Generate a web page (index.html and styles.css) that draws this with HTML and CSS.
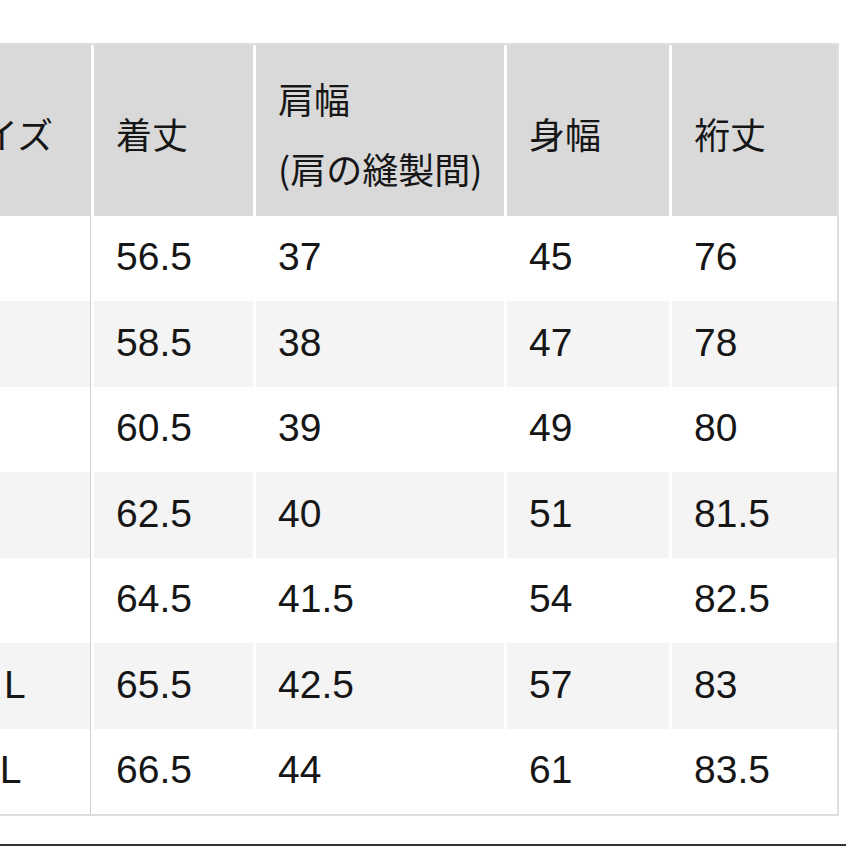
FILE: index.html
```html
<!DOCTYPE html>
<html lang="ja">
<head>
<meta charset="utf-8">
<title>サイズ表</title>
<link rel="stylesheet" href="styles.css">
</head>
<body>
<div class="page">
  <div class="size-table" role="table">
    <div class="row head" role="row">
      <div class="cell" role="columnheader"><span>サイズ</span></div>
      <div class="cell" role="columnheader"><span>着丈</span></div>
      <div class="cell" role="columnheader"><span>肩幅</span><span>(肩の縫製間)</span></div>
      <div class="cell" role="columnheader"><span>身幅</span></div>
      <div class="cell" role="columnheader"><span>裄丈</span></div>
    </div>
    <div class="row" role="row">
      <div class="cell size">XS</div><div class="cell">56.5</div><div class="cell">37</div><div class="cell">45</div><div class="cell">76</div>
    </div>
    <div class="row alt" role="row">
      <div class="cell size">S</div><div class="cell">58.5</div><div class="cell">38</div><div class="cell">47</div><div class="cell">78</div>
    </div>
    <div class="row" role="row">
      <div class="cell size">M</div><div class="cell">60.5</div><div class="cell">39</div><div class="cell">49</div><div class="cell">80</div>
    </div>
    <div class="row alt" role="row">
      <div class="cell size">L</div><div class="cell">62.5</div><div class="cell">40</div><div class="cell">51</div><div class="cell">81.5</div>
    </div>
    <div class="row" role="row">
      <div class="cell size">XL</div><div class="cell">64.5</div><div class="cell">41.5</div><div class="cell">54</div><div class="cell">82.5</div>
    </div>
    <div class="row alt" role="row">
      <div class="cell size">XXL</div><div class="cell">65.5</div><div class="cell">42.5</div><div class="cell">57</div><div class="cell">83</div>
    </div>
    <div class="row" role="row">
      <div class="cell size">3XL</div><div class="cell">66.5</div><div class="cell">44</div><div class="cell">61</div><div class="cell">83.5</div>
    </div>
  </div>
  <div class="rule"></div>
</div>
</body>
</html>
```

FILE: styles.css
```css
html, body {
  margin: 0;
  padding: 0;
  background: #ffffff;
}

body {
  width: 846px;
  height: 846px;
  overflow: hidden;
  color: #161616;
  font-family: "Liberation Sans", "Noto Sans CJK JP", sans-serif;
}

.page {
  padding-top: 43px;
}

.size-table {
  display: grid;
  grid-template-columns: 167px 159px 248px 162px 165px;
  grid-template-rows: 171px 85px 86px 85px 86px 85px 86px 85px;
  column-gap: 3px;
  margin-left: -78px;
  width: max-content;
  border: 2px solid #dedede;
  background: #ffffff;
}

.row {
  display: contents;
}

.cell {
  display: flex;
  align-items: center;
  padding-left: 22px;
  padding-bottom: 3px;
  font-size: 39px;
  line-height: 46px;
  background: #ffffff;
}

.row.alt .cell {
  background: #f4f4f4;
}

.cell.size {
  letter-spacing: 3px;
  border-right: 1px solid #cfcfcf;
}

.head .cell {
  flex-direction: column;
  align-items: flex-start;
  justify-content: center;
  padding-bottom: 0;
  padding-top: 4px;
  background: #d9d9d9;
  font-family: "Noto Sans CJK JP", sans-serif;
  font-size: 36px;
  line-height: 70px;
}

.rule {
  margin-top: 28px;
  border-top: 2px solid #333333;
}
```
